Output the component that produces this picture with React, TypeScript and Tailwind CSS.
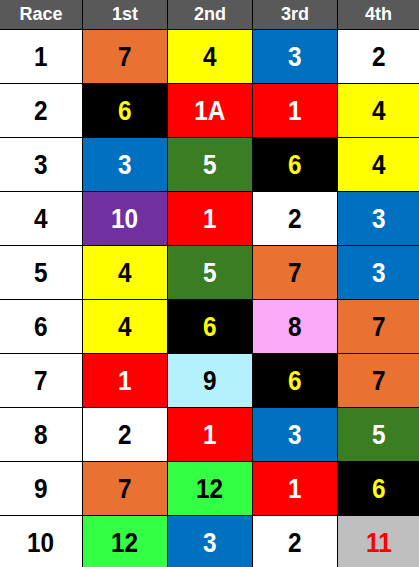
const O = 'bg-[#E97132] text-black';
const Y = 'bg-[#FFFF00] text-black';
const B = 'bg-[#0070C0] text-white';
const W = 'bg-white text-black';
const K = 'bg-black text-[#FFFF00]';
const R = 'bg-[#FF0000] text-white';
const G = 'bg-[#3B7D23] text-white';
const P = 'bg-[#7030A0] text-white';
const PK = 'bg-[#FAAAF8] text-black';
const C = 'bg-[#B3F2FC] text-black';
const LG = 'bg-[#33FF44] text-black';
const GR = 'bg-[#BFBFBF] text-[#FF0000]';

type Cell = [string, string];

const races: Cell[][] = [
  [['7', O], ['4', Y], ['3', B], ['2', W]],
  [['6', K], ['1A', R], ['1', R], ['4', Y]],
  [['3', B], ['5', G], ['6', K], ['4', Y]],
  [['10', P], ['1', R], ['2', W], ['3', B]],
  [['4', Y], ['5', G], ['7', O], ['3', B]],
  [['4', Y], ['6', K], ['8', PK], ['7', O]],
  [['1', R], ['9', C], ['6', K], ['7', O]],
  [['2', W], ['1', R], ['3', B], ['5', G]],
  [['7', O], ['12', LG], ['1', R], ['6', K]],
  [['12', LG], ['3', B], ['2', W], ['11', GR]],
];

const headers = ['Race', '1st', '2nd', '3rd', '4th'];

export default function App() {
  return (
    <div
      className="w-[419px] h-[567px] overflow-hidden bg-white"
      style={{ fontFamily: '"Liberation Sans", Arial, sans-serif' }}
    >
      <div className="grid grid-cols-[82px_84px_84px_84px_81px] grid-rows-[29px_repeat(10,53px)] gap-px bg-black">
        {headers.map((h) => (
          <div key={h} className="flex items-center justify-center bg-[#595959] text-white text-[18px] font-bold">
            {h}
          </div>
        ))}
        {races.map((row, i) => (
          <div key={i} className="contents">
            <div className="flex items-center justify-center bg-white text-black text-[28px] font-bold">
              <span className="inline-block scale-x-[0.87]">{i + 1}</span>
            </div>
            {row.map(([num, cls], j) => (
              <div key={j} className={`flex items-center justify-center text-[28px] font-bold ${cls}`}>
                <span className="inline-block scale-x-[0.87]">{num}</span>
              </div>
            ))}
          </div>
        ))}
      </div>
    </div>
  );
}
